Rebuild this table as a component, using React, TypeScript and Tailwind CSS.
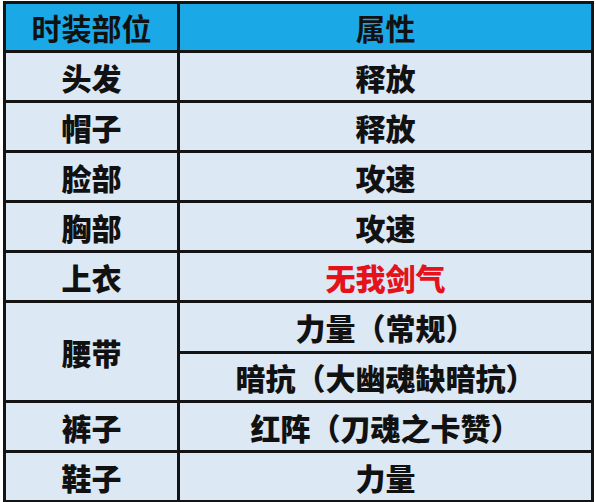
import React from "react"

type Row = { part: string; attrs: { text: string; red?: boolean }[] }

const rows: Row[] = [
  { part: "头发", attrs: [{ text: "释放" }] },
  { part: "帽子", attrs: [{ text: "释放" }] },
  { part: "脸部", attrs: [{ text: "攻速" }] },
  { part: "胸部", attrs: [{ text: "攻速" }] },
  { part: "上衣", attrs: [{ text: "无我剑气", red: true }] },
  { part: "腰带", attrs: [{ text: "力量（常规）" }, { text: "暗抗（大幽魂缺暗抗）" }] },
  { part: "裤子", attrs: [{ text: "红阵（刀魂之卡赞）" }] },
  { part: "鞋子", attrs: [{ text: "力量" }] },
]

const cell = "border-[3px] border-[#141414] text-center align-middle p-0"

export default function App() {
  return (
    <div
      className="w-[596px] h-[502px] bg-white overflow-hidden text-[30px] leading-none font-black text-[#111]"
      style={{ fontFamily: '"Noto Sans CJK SC", "Noto Sans", sans-serif' }}
    >
      <table className="border-collapse table-fixed w-[591px] ml-[3px] mt-[1px]">
        <colgroup>
          <col className="w-[174px]" />
          <col />
        </colgroup>
        <thead>
          <tr className="h-[49px] bg-[#1ba8e6]">
            <th className={cell}>时装部位</th>
            <th className={cell}>属性</th>
          </tr>
        </thead>
        <tbody className="bg-[#dce8f4]">
          {rows.map((r) =>
            r.attrs.map((a, i) => (
              <tr key={r.part + i} className={r.attrs.length > 1 ? (i === 0 ? "h-[51px]" : "h-[49px]") : "h-[50px]"}>
                {i === 0 && (
                  <td className={cell} rowSpan={r.attrs.length}>
                    {r.part}
                  </td>
                )}
                <td className={`${cell} ${a.red ? "text-[#e3121b]" : ""}`}>{a.text}</td>
              </tr>
            ))
          )}
        </tbody>
      </table>
    </div>
  )
}
